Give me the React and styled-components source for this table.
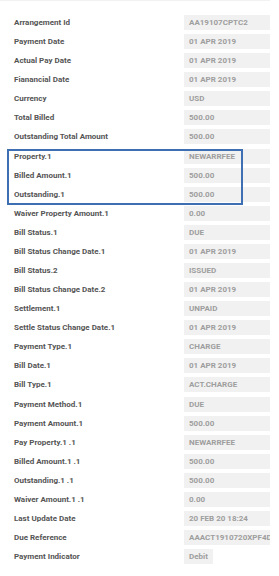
import React from "react";
import styled, { createGlobalStyle } from "styled-components";

const Global = createGlobalStyle`
  html, body { margin: 0; padding: 0; background: #fff; }
  body { font-family: Roboto, "Liberation Sans", Arial, sans-serif; }
`;

const Page = styled.div`
  width: 279px;
  display: flex;
  flex-direction: column;
`;

const TopEdge = styled.div`
  width: 270px;
  height: 1px;
  background: #f2f2f2;
  margin-bottom: 14px;
`;

const List = styled.div`
  display: flex;
  flex-direction: column;
  gap: 4.08px;
`;

const Group = styled.div`
  position: relative;
  display: flex;
  flex-direction: column;
  gap: 4.08px;
  &::after {
    content: "";
    position: absolute;
    left: 7px;
    width: 236px;
    top: 0px;
    bottom: -3px;
    border: 2px solid #3f6fb3;
    box-sizing: border-box;
    pointer-events: none;
  }
`;

const Row = styled.div`
  display: grid;
  grid-template-columns: 184px 86px;
  height: 15px;
  align-items: center;
`;

const Label = styled.div`
  padding-left: 14px;
  font-size: 8px;
  font-weight: 700;
  color: #555;
  white-space: nowrap;
`;

const Value = styled.div`
  height: 15px;
  box-sizing: border-box;
  padding: 0 5px;
  background: #f1f1f1;
  color: #9e9e9e;
  font-size: 8px;
  font-weight: 700;
  line-height: 15px;
  white-space: nowrap;
  overflow: hidden;
  justify-self: ${(p) => (p.$fit ? "start" : "stretch")};
`;

const rows1 = [
  ["Arrangement Id", "AA19107CPTC2"],
  ["Payment Date", "01 APR 2019"],
  ["Actual Pay Date", "01 APR 2019"],
  ["Fianancial Date", "01 APR 2019"],
  ["Currency", "USD"],
  ["Total Billed", "500.00"],
  ["Outstanding Total Amount", "500.00"],
];

const rows2 = [
  ["Property.1", "NEWARRFEE"],
  ["Billed Amount.1", "500.00"],
  ["Outstanding.1", "500.00"],
];

const rows3 = [
  ["Waiver Property Amount.1", "0.00"],
  ["Bill Status.1", "DUE"],
  ["Bill Status Change Date.1", "01 APR 2019"],
  ["Bill Status.2", "ISSUED"],
  ["Bill Status Change Date.2", "01 APR 2019"],
  ["Settlement.1", "UNPAID"],
  ["Settle Status Change Date.1", "01 APR 2019"],
  ["Payment Type.1", "CHARGE"],
  ["Bill Date.1", "01 APR 2019"],
  ["Bill Type.1", "ACT.CHARGE"],
  ["Payment Method.1", "DUE"],
  ["Payment Amount.1", "500.00"],
  ["Pay Property.1 .1", "NEWARRFEE"],
  ["Billed Amount.1 .1", "500.00"],
  ["Outstanding.1 .1", "500.00"],
  ["Waiver Amount.1 .1", "0.00"],
  ["Last Update Date", "20 FEB 20 18:24"],
  ["Due Reference", "AAACT1910720XPF4DC"],
];

const Field = ({ label, value, fit }) => (
  <Row>
    <Label>{label}</Label>
    <Value $fit={fit}>{value}</Value>
  </Row>
);

export default function App() {
  return (
    <Page>
      <Global />
      <TopEdge />
      <List>
        {rows1.map(([l, v]) => (
          <Field key={l} label={l} value={v} />
        ))}
        <Group>
          {rows2.map(([l, v]) => (
            <Field key={l} label={l} value={v} />
          ))}
        </Group>
        {rows3.map(([l, v]) => (
          <Field key={l} label={l} value={v} />
        ))}
        <Field label="Payment Indicator" value="Debit" fit />
      </List>
    </Page>
  );
}
